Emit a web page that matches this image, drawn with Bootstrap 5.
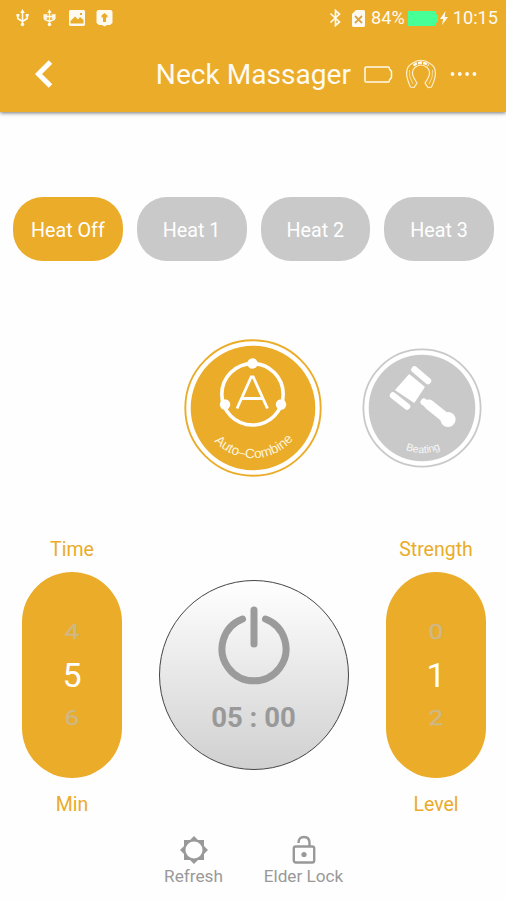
<!DOCTYPE html>
<html lang="en">
<head>
<meta charset="utf-8">
<meta name="viewport" content="width=device-width, initial-scale=1">
<title>Neck Massager</title>
<link rel="stylesheet" href="https://cdn.jsdelivr.net/npm/bootstrap@5.3.0/dist/css/bootstrap.min.css">
<style>
:root{--amber:#eaac29;--idle:#c9c9c9;--muted:#999}
body{font-family:Roboto,"Liberation Sans",sans-serif;line-height:1;background:#fefefe}
.screen{width:506px;height:900px}
svg{display:block;flex:none}
.app-head{height:112px;background:var(--amber);color:#fffaf0;box-shadow:0 1px 4px rgba(0,0,0,.55)}
.status{height:36px;padding:0 8px 0 15px;font-size:18.2px}
.ic-usb2{margin-left:12px}
.ic-image{margin-left:12px}
.ic-shield{margin-left:11px}
.ic-sim{margin-left:10px}
.pct{margin-left:6px}
.ic-charge{margin-left:3px}
.ic-bolt{margin:0 5px 0 2px}
.appbar{height:76px;padding:0 28px 0 34px}
.appbar h1{font-size:28.1px;font-weight:400;line-height:1;margin:2px 13px 0 auto}
.ic-device{margin-left:13px}
.ic-more{margin-left:14px}
.heats{margin-top:85px;padding:0 12px 0 13px;gap:14px}
.heat{flex:1 1 0;height:64px;border-radius:30px;border:0;padding:3px 0 0;color:#fff;background:var(--idle);font-size:19.7px}
.heat.on{background:var(--amber)}
.modes{margin-top:78px;padding-right:24px;gap:40px}
.panel{margin-top:63px;padding:0 20px 0 22px}
.dial{width:100px;color:var(--amber);font-size:19.5px}
.dial-name{height:20px;line-height:20px;white-space:nowrap}
.wheel{width:100px;height:206px;border-radius:50px;background:var(--amber);margin:12px 0 17px}
.wheel span{color:#cfb885;font-size:21px;line-height:32px;transform:scaleX(1.25);-webkit-text-stroke:.4px #cfb885}
.wheel b{color:#fff;font-weight:400;font-size:34px;line-height:54px}
.power{width:190px;height:190px;border:1px solid #444;background:linear-gradient(#fff,#d0d0d0);color:var(--muted);margin:40px 1px 0 0;padding:22px 0 0}
.power time{font-size:27.5px;font-weight:700;margin-top:18px}
.tool{color:var(--muted);font-size:17.2px;width:90px;gap:3px;white-space:nowrap}
.tools{margin-top:20px;gap:20px;padding-right:9px}
</style>
</head>
<body>
<main class="screen d-flex flex-column overflow-hidden">
<header class="app-head flex-shrink-0">
 <div class="status d-flex align-items-center">
  <svg width="15" height="18" viewBox="0 0 15 18" fill="none" stroke="#fffaf0" stroke-width="1.6"><path d="M7.500 2v14M2.800 6v3.500l4.700 3M12.200 6v3.500l-4.700 3"/><path d="M7.500 0l2.300 4H5.200zM1.400 5h3v2.500h-3zM10.700 5h3v2.500h-3z" fill="#fffaf0" stroke="none"/><circle cx="7.500" cy="15.500" r="1.800" fill="#fffaf0" stroke="none"/></svg>
  <svg class="ic-usb2" width="15" height="18" viewBox="0 0 15 18" fill="none" stroke="#fffaf0" stroke-width="1.4"><path d="M7.500 2v14M2.800 6v4.500l4.700 2 4.700-2V6M3 7.500h9"/><path d="M7.500 0l2.300 4H5.200zM1.400 5h4v5h-4zM9.700 5h4v5h-4z" fill="#fffaf0" stroke="none" opacity=".8"/><circle cx="7.500" cy="15.500" r="1.800" fill="#fffaf0" stroke="none"/></svg>
  <svg class="ic-image" width="16" height="16" viewBox="0 0 16 16"><path fill="#fffaf0" fill-rule="evenodd" d="M1 0h14l1 1v14l-1 1H1l-1-1V1zM1.500 13.500h13V10L11 7 9 9.500 6 6.500 1.500 11zM11 3v2h2V3z"/></svg>
  <svg class="ic-shield" width="17" height="17" viewBox="0 0 17 17"><path fill="#fffaf0" fill-rule="evenodd" d="M2 0h13l1.500 1.500V13L14 15H11L8.500 16.500 6 15H3L.500 13V1.500zM8.500 3L5.500 5.500v2H7V12h3V7.500h1.500v-2z"/></svg>
  <svg class="ms-auto" width="13" height="18" viewBox="0 0 13 18" fill="none" stroke="#fffaf0" stroke-width="1.700"><path d="M1.500 4.500l9 8.500-4 3.500v-15l4 3.500-9 8.500"/></svg>
  <svg class="ic-sim" width="13" height="17" viewBox="0 0 13 17"><path fill="#fffaf0" d="M4 0h8l1 1v15l-1 1H1l-1-1V4z"/><path d="M3 6l7 7M10 6l-7 7" stroke="#d9a548" stroke-width="1.800"/></svg>
  <span class="pct">84%</span>
  <svg class="ic-charge" width="30" height="15" viewBox="0 0 30 15"><path fill="#46ff96" d="M0 0h28v3l2 1v7l-2 1v3H0z"/></svg>
  <svg class="ic-bolt" width="8" height="14" viewBox="0 0 8 14"><path fill="#fffaf0" d="M5.500 0L0 8h3.200L2 14l6-8H4.700z"/></svg>
  <span>10:15</span>
 </div>
 <div class="appbar d-flex align-items-center">
  <svg width="20" height="28" viewBox="0 0 20 28"><path d="M16.500 2L4.500 14l12 12" fill="none" stroke="#fff" stroke-width="5"/></svg>
  <h1>Neck Massager</h1>
  <svg width="29" height="17" viewBox="0 0 29 17"><path d="M2 1h22.500q1 0 1 2l2 2.500v6l-2 2.500q0 2-1 2H2q-1 0-1-1V2q0-1 1-1z" fill="none" stroke="#fffaf0" stroke-width="1.500"/></svg>
  <svg class="ic-device" width="30" height="30" viewBox="0 0 30 30" fill="none" stroke="#fff0cf"><path d="M8 28.500L4.500 28Q-4 10 6 4.500 15-2 24 4.500q10 5.500 1.500 23.500l-3.500.500-3-4.500q8-11 2-15.500-6-5-12 0-6 4.500 2 15.500z" stroke-width="1.200"/><path d="M3.500 11q-1 7 3.500 14M26.500 11q1 7-3.500 14" stroke-width=".7"/><path d="M7.500 6.500l3-2L15 3.500l4.500 1 3 2" stroke="#fffaf0" stroke-width="2.600" stroke-dasharray="4 1.200"/></svg>
  <svg class="ic-more" width="28" height="6" viewBox="0 0 28 6" fill="#fffaf0"><circle cx="2.500" cy="3" r="1.900"/><circle cx="9.800" cy="3" r="1.900"/><circle cx="17.100" cy="3" r="1.900"/><circle cx="24.400" cy="3" r="1.900"/></svg>
 </div>
</header>
<section class="heats d-flex">
 <button class="heat on">Heat Off</button><button class="heat">Heat 1</button><button class="heat">Heat 2</button><button class="heat">Heat 3</button>
</section>
<section class="modes d-flex justify-content-end align-items-center">
 <svg width="138" height="138" viewBox="0 0 138 138" fill="none">
  <circle cx="69" cy="69" r="67.700" fill="#fff" stroke="#eaac29" stroke-width="1.900"/><circle cx="69" cy="69" r="62.300" fill="#eaac29"/>
  <circle cx="68.500" cy="55.300" r="30.700" stroke="#fff" stroke-width="3.600"/>
  <g fill="#fff"><circle cx="68.500" cy="24.500" r="5.200"/><circle cx="41" cy="65.500" r="5.200"/><circle cx="97" cy="65.500" r="5.200"/></g>
  <path d="M53 69.500L67.200 38h2L83.500 69.500M58.500 59.500h20" stroke="#fff" stroke-width="2.800"/>
  <path id="arcAuto" d="M23 92A52.500 52.500 0 0 0 115 92"/>
  <text fill="#fff5dc" font-size="13.500" font-family="'Liberation Sans',Arial,sans-serif" text-anchor="middle"><textPath href="#arcAuto" startOffset="51%">Auto–Combine</textPath></text>
 </svg>
 <svg width="120" height="120" viewBox="0 0 120 120" fill="none">
  <circle cx="60" cy="60" r="58.600" fill="#fff" stroke="#c9c9c9" stroke-width="1.800"/><circle cx="60" cy="60" r="53.300" fill="#c9c9c9"/>
  <g stroke="#fff" stroke-linecap="round"><path d="M52.500 21.500L66 33M31 47.500L45 58.500" stroke-width="6.500"/><path d="M62 54L84 70" stroke-width="7"/><path d="M67 56.500L85 71" stroke-width="10"/></g>
  <circle cx="86" cy="71.500" r="7.600" fill="#fff"/><path d="M47.300 27L62 39 52 54 34 42Z" fill="#fff" stroke="#fff" stroke-width="1.500" stroke-linejoin="round"/>
  <path id="arcBeat" d="M27 91A46 46 0 0 0 93 91"/>
  <text fill="#f8f8f8" font-size="10.500" font-family="'Liberation Sans',Arial,sans-serif" text-anchor="middle"><textPath href="#arcBeat" startOffset="51.500%">Beating</textPath></text>
 </svg>
</section>
<section class="panel d-flex justify-content-between">
 <div class="dial text-center d-flex flex-column align-items-center"><div class="dial-name">Time</div><div class="wheel d-flex flex-column align-items-center justify-content-center"><span>4</span><b>5</b><span>6</span></div><div class="dial-name">Min</div></div>
 <button class="power rounded-circle d-flex flex-column align-items-center">
  <svg width="74" height="83" viewBox="0 0 74 83" fill="none" stroke="#9b9b9b" stroke-width="7" stroke-linecap="round"><path d="M37 7v34M25.500 16A32 32 0 1 0 48.500 16"/></svg>
  <time>05 : 00</time>
 </button>
 <div class="dial text-center d-flex flex-column align-items-center"><div class="dial-name">Strength</div><div class="wheel d-flex flex-column align-items-center justify-content-center"><span>0</span><b>1</b><span>2</span></div><div class="dial-name">Level</div></div>
</section>
<footer class="tools d-flex justify-content-center">
 <div class="tool d-flex flex-column align-items-center"><svg width="28" height="30" viewBox="-14 -15 28 30"><path fill="#999" fill-rule="evenodd" d="M0-14L4-10H10V-4L14 0 10 4V10H4L0 14-4 10H-10V4L-14 0-10-4V-10H-4ZM0-8.500A8.500 8.500 0 1 0 0 8.500 8.500 8.500 0 1 0 0-8.500Z"/></svg><span>Refresh</span></div>
 <div class="tool d-flex flex-column align-items-center"><svg width="24" height="30" viewBox="0 0 24 30" fill="none" stroke="#999" stroke-width="2.400"><rect x="1.800" y="11.500" width="20.400" height="16" rx="2"/><path d="M6.500 8Q6.500 2 12 2t5.500 6v4"/><circle cx="12" cy="19.500" r="2.600" fill="#999" stroke="none"/></svg><span>Elder Lock</span></div>
</footer>
</main>
<script src="https://cdn.jsdelivr.net/npm/bootstrap@5.3.0/dist/js/bootstrap.bundle.min.js"></script>
</body>
</html>
